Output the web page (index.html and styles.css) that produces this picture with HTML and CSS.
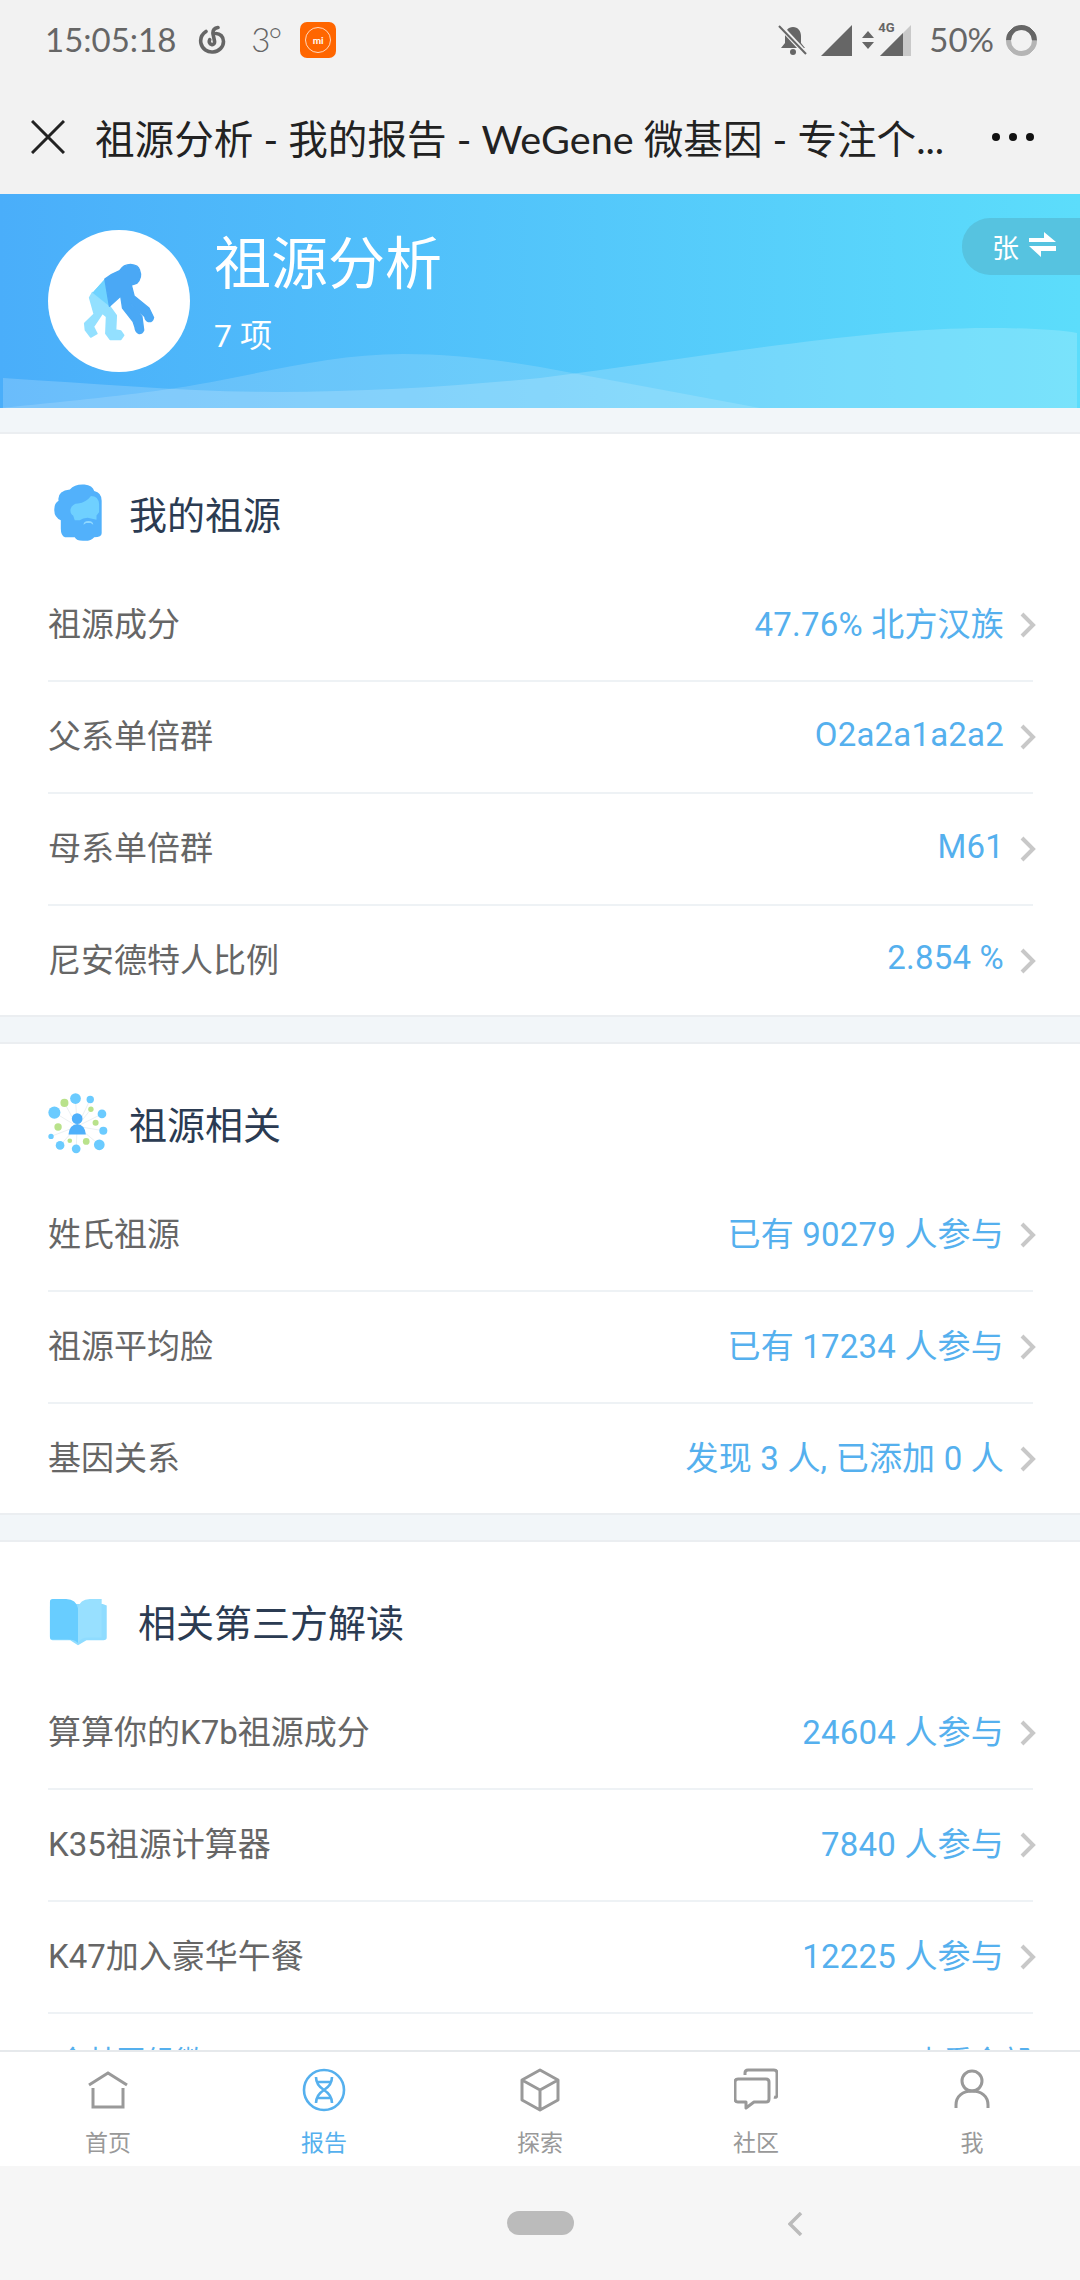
FILE: index.html
```html
<!DOCTYPE html>
<html>
<head>
    <meta charset="UTF-8">
    <meta name="viewport" content="width=device-width, initial-scale=1.0">
    <title>祖源分析 - 我的报告</title>
    <link rel="stylesheet" href="styles.css">
</head>
<body>
    <div class="status-bar">
        <div class="status-left">
            <span class="time">15:05:18</span>
            <svg class="ico-netease" viewBox="0 0 30 30"><path d="M20 2.500c-3 .5-5.500 2.500-5 6.500l1.500 7c.5 2.500-1 4-3 3.500-2-.4-2.800-2.800-1.800-4.800 M8 6.500C3.500 9.500 2 14 3 18.500c1.300 5.500 6.500 9 12 8.500 6-.5 10.500-5 10.500-10.500 0-5-3.500-8-7.500-8" fill="none" stroke="#666" stroke-width="3.600" stroke-linecap="round"/></svg>
            <span class="temp">3°</span>
            <span class="ico-mi"><span class="mi-ring"></span><span class="mi-text">mi</span></span>
        </div>
        <div class="status-right">
            <svg class="ico-bell" viewBox="0 0 32 32"><path d="M16 3c-5 0-8 4-8 9v7l-4 5h24l-4-5v-7c0-5-3-9-8-9z" fill="#666"/><circle cx="16" cy="28" r="3" fill="#666"/><path d="M3 2l26 28" stroke="#f2f2f2" stroke-width="5"/><path d="M2 2l27 28" stroke="#666" stroke-width="2"/></svg>
            <svg class="ico-signal" viewBox="0 0 31 31"><path d="M31 0v31H0z" fill="#666"/></svg>
            <svg class="ico-arrows" viewBox="0 0 12 18"><path d="M6 0l6 7H0zM6 18l-6-7h12z" fill="#666"/></svg>
            <span class="signal-4g">
                <span class="label-4g">4G</span>
                <svg class="ico-signal" viewBox="0 0 31 31"><path d="M31 0v31H0z" fill="#c9c9c9"/><path d="M23 8v23H0z" fill="#666"/></svg>
            </span>
            <span class="battery-text">50%</span>
            <span class="battery-ring"></span>
        </div>
    </div>

    <div class="nav-bar">
        <svg class="ico-close" viewBox="0 0 34 34"><path d="M1 1l32 32M33 1L1 33" stroke="#222" stroke-width="3"/></svg>
        <div class="nav-title">祖源分析 - 我的报告 - WeGene 微基因 - 专注个...</div>
        <div class="nav-dots"><i></i><i></i><i></i></div>
    </div>

    <div class="page">
        <div class="hero">
            <svg class="hero-waves" viewBox="0 0 1080 214" preserveAspectRatio="none">
                <path d="M0 214C60 208 120 202 162 196C250 184 320 160 403 160C450 160 500 166 540 173L760 214Z" fill="#fff" fill-opacity="0.15"/>
                <path d="M3 184C100 190 190 198 275 198C370 198 460 192 540 184C700 164 860 134 988 134C1030 134 1060 136 1077 139V214H3Z" fill="#fff" fill-opacity="0.18"/>
            </svg>
            <div class="hero-avatar">
                <svg viewBox="240 215 210 232" preserveAspectRatio="none" class="ico-monkey">
                    <path d="M270 305L305 265L318 345Z" fill="#6fd3ff"/>
                    <path d="M270 305L262 320L275 368L248 395L250 415L265 435L282 425L272 405L298 365L310 375L308 425L320 442L350 442L358 430L350 418L335 415L337 372L318 345Z" fill="#93e0ff" stroke="#93e0ff" stroke-width="5" stroke-linejoin="round"/>
                    <path d="M270 305L305 265L318 345Z" fill="#6fd3ff"/>
                    <path d="M305 265Q322 250 347 240Q358 222 378 222Q400 224 403 238Q412 262 395 278L380 283L388 315L430 350L443 378Q440 392 428 390Q420 388 418 375L377 338L410 375L415 415Q410 426 402 425Q392 422 390 405L385 390L355 350L350 315L318 345Z" fill="#4aa8f5" stroke="#4aa8f5" stroke-width="4" stroke-linejoin="round"/>
                </svg>
            </div>
            <div class="hero-text">
                <div class="hero-title">祖源分析</div>
                <div class="hero-count">7 项</div>
            </div>
            <div class="hero-switch">
                <span>张</span>
                <svg class="ico-swap" viewBox="0 0 27 25"><path d="M0 6h15V0l12 10H0zM27 14v5H12v6L0 14z" fill="#fff"/></svg>
            </div>
        </div>

        <div class="card">
            <div class="card-head">
                <svg class="ico-head" viewBox="95 65 160 185">
                    <path d="M150 85Q165 68 195 70Q220 72 225 90Q248 95 248 120L248 220Q248 232 225 232Q215 245 190 243Q170 243 165 232L135 232Q122 228 122 205L122 180Q100 170 102 145Q102 128 115 120Q110 90 150 85Z" fill="#52b1fb"/>
                    <path d="M152 145Q158 128 175 128Q200 125 215 105Q238 105 240 130L240 155L232 165L232 178L205 172Q190 172 180 180L165 180L160 165Q150 160 152 145Z" fill="#6fd0ff"/>
                    <path d="M192 194Q192 182 207 182Q222 182 222 194L214 188H200Z" fill="#8fd8ff"/>
                </svg>
                <span class="head-text">我的祖源</span>
            </div>
            <a class="row"><span class="row-label">祖源成分</span><span class="row-value">47.76% 北方汉族</span><svg class="chev" viewBox="0 0 16 26"><path d="M2 2l11 11L2 24"/></svg></a>
            <a class="row"><span class="row-label">父系单倍群</span><span class="row-value">O2a2a1a2a2</span><svg class="chev" viewBox="0 0 16 26"><path d="M2 2l11 11L2 24"/></svg></a>
            <a class="row"><span class="row-label">母系单倍群</span><span class="row-value">M61</span><svg class="chev" viewBox="0 0 16 26"><path d="M2 2l11 11L2 24"/></svg></a>
            <a class="row"><span class="row-label">尼安德特人比例</span><span class="row-value">2.854 %</span><svg class="chev" viewBox="0 0 16 26"><path d="M2 2l11 11L2 24"/></svg></a>
        </div>

        <div class="card">
            <div class="card-head">
                <svg class="ico-net" viewBox="80 90 185 190">
                    <path d="M173 195L168 112M173 195L212 115M173 195L105 154M173 195L247 158M173 195L251 208M173 195L95 225M173 195L122 252M173 195L170 262M173 195L239 250M173 195L135 125M173 195L214 144" stroke="#e3e8ec" stroke-width="2"/>
                    <g fill="#6bcbff">
                        <circle cx="168" cy="112" r="16"/><circle cx="212" cy="115" r="11"/><circle cx="105" cy="154" r="18"/>
                        <circle cx="247" cy="158" r="13"/><circle cx="251" cy="208" r="12"/><circle cx="95" cy="225" r="8"/>
                        <circle cx="122" cy="252" r="13"/><circle cx="170" cy="262" r="13"/><circle cx="239" cy="250" r="16"/>
                    </g>
                    <g fill="#b9e28b">
                        <circle cx="135" cy="125" r="12"/><circle cx="214" cy="144" r="8"/><circle cx="116" cy="197" r="11"/>
                        <circle cx="228" cy="184" r="9"/><circle cx="151" cy="238" r="7"/><circle cx="200" cy="240" r="10"/>
                    </g>
                    <circle cx="173" cy="172" r="16" fill="#4fb0fb"/>
                    <path d="M147 219Q150 190 173 188Q196 190 199 219Z" fill="#4fb0fb"/>
                </svg>
                <span class="head-text">祖源相关</span>
            </div>
            <a class="row"><span class="row-label">姓氏祖源</span><span class="row-value">已有 90279 人参与</span><svg class="chev" viewBox="0 0 16 26"><path d="M2 2l11 11L2 24"/></svg></a>
            <a class="row"><span class="row-label">祖源平均脸</span><span class="row-value">已有 17234 人参与</span><svg class="chev" viewBox="0 0 16 26"><path d="M2 2l11 11L2 24"/></svg></a>
            <a class="row"><span class="row-label">基因关系</span><span class="row-value">发现 3 人, 已添加 0 人</span><svg class="chev" viewBox="0 0 16 26"><path d="M2 2l11 11L2 24"/></svg></a>
        </div>

        <div class="card">
            <div class="card-head">
                <svg class="ico-book" viewBox="90 115 170 142">
                    <path d="M100 133H248L260 137V232Q260 240 250 240H200L175 255L152 240H100Q92 240 92 232V140Q92 133 100 133Z" fill="#8fdcff"/>
                    <path d="M100 118H140Q170 120 175 145V248Q165 238 145 238H100Q92 238 92 230V126Q92 118 100 118Z" fill="#68cdff"/>
                    <path d="M175 145Q180 120 210 118H245V232H205Q185 232 175 248Z" fill="#98e0ff"/>
                </svg>
                <span class="head-text">相关第三方解读</span>
            </div>
            <a class="row"><span class="row-label">算算你的K7b祖源成分</span><span class="row-value">24604 人参与</span><svg class="chev" viewBox="0 0 16 26"><path d="M2 2l11 11L2 24"/></svg></a>
            <a class="row"><span class="row-label">K35祖源计算器</span><span class="row-value">7840 人参与</span><svg class="chev" viewBox="0 0 16 26"><path d="M2 2l11 11L2 24"/></svg></a>
            <a class="row"><span class="row-label">K47加入豪华午餐</span><span class="row-value">12225 人参与</span><svg class="chev" viewBox="0 0 16 26"><path d="M2 2l11 11L2 24"/></svg></a>
            <a class="row row-peek"><span class="row-value row-more">全基因组微</span><span class="row-value">查看全部</span></a>
        </div>
    </div>

    <div class="tab-bar">
        <div class="tab">
            <svg class="tab-ico" viewBox="0 0 44 44"><path d="M3 17L22 5l19 12M7 20v19h30V20" fill="none" stroke="#999" stroke-width="3"/></svg>
            <span>首页</span>
        </div>
        <div class="tab tab-active">
            <svg class="tab-ico" viewBox="0 0 44 44"><circle cx="22" cy="22" r="20" fill="none" stroke="#55b0ee" stroke-width="2.600"/><path d="M14 9Q14 17 22 22T30 35M30 9Q30 17 22 22T14 35M15 14H29M15 30H29" fill="none" stroke="#55b0ee" stroke-width="2.600"/></svg>
            <span>报告</span>
        </div>
        <div class="tab">
            <svg class="tab-ico" viewBox="0 0 44 44"><path d="M22 2l18 10v20L22 42 4 32V12zM4 12l18 10 18-10M22 22v20" fill="none" stroke="#999" stroke-width="3" stroke-linejoin="round"/></svg>
            <span>探索</span>
        </div>
        <div class="tab">
            <svg class="tab-ico" viewBox="0 0 44 44"><path d="M4 11h28q3 0 3 3v17q0 3-3 3H20l-8 6v-6H4q-3 0-3-3V14q0-3 3-3zM11 7V5q0-3 3-3h26q3 0 3 3v22q0 3-3 2" fill="none" stroke="#999" stroke-width="3" stroke-linejoin="round"/></svg>
            <span>社区</span>
        </div>
        <div class="tab">
            <svg class="tab-ico" viewBox="0 0 44 44"><circle cx="22" cy="13" r="10" fill="none" stroke="#999" stroke-width="3"/><path d="M6 40v-3c0-9 7-14 16-14s16 5 16 14v3" fill="none" stroke="#999" stroke-width="3"/></svg>
            <span>我</span>
        </div>
    </div>

    <div class="system-bar">
        <span class="home-pill"></span>
        <svg class="ico-back" viewBox="0 0 15 24"><path d="M13 1L2 12l11 11" fill="none" stroke="#bbb" stroke-width="3.500"/></svg>
    </div>
</body>
</html>
```

FILE: styles.css
```css
* {
    box-sizing: border-box;
}
html, body {
    margin: 0;
    padding: 0;
}
body {
    width: 1080px;
    height: 2280px;
    overflow: hidden;
    display: flex;
    flex-direction: column;
    background-color: #F2F6F9;
    font-family: 'Roboto', 'Noto Sans CJK SC', sans-serif;
}

/* phone status bar */
.status-bar {
    height: 80px;
    background-color: #F2F2F2;
    display: flex;
    justify-content: space-between;
    align-items: center;
    padding: 0 43px 0 45px;
    color: #666;
    font-family: 'Lato', 'Noto Sans CJK SC', sans-serif;
    font-size: 33px;
}
.status-left, .status-right {
    display: flex;
    align-items: center;
}
.time, .temp, .battery-text {
    margin-top: -2px;
}
.ico-netease {
    width: 30px;
    height: 30px;
    margin-left: 22px;
}
.temp {
    margin-left: 23px;
    letter-spacing: -2px;
    font-weight: 300;
}
.ico-mi {
    position: relative;
    width: 36px;
    height: 36px;
    margin-left: 20px;
    border-radius: 7px;
    background-color: #FF6600;
    display: flex;
    align-items: center;
    justify-content: center;
}
.mi-ring {
    position: absolute;
    left: 5px;
    top: 5px;
    width: 26px;
    height: 26px;
    border-radius: 50%;
    border: 1px solid #ffd9bf;
}
.mi-text {
    color: #fff;
    font-size: 10px;
    font-weight: bold;
    line-height: 1;
}
.ico-bell {
    width: 32px;
    height: 32px;
    margin-right: 12px;
}
.ico-signal {
    width: 31px;
    height: 31px;
    display: block;
}
.ico-arrows {
    width: 12px;
    height: 18px;
    margin: 0 6px 0 10px;
}
.signal-4g {
    position: relative;
    display: block;
}
.label-4g {
    position: absolute;
    left: -2px;
    top: -4px;
    font-family: 'Roboto', sans-serif;
    font-size: 13px;
    font-weight: bold;
    line-height: 1;
}
.battery-text {
    margin-left: 18px;
}
.battery-ring {
    width: 31px;
    height: 31px;
    margin-left: 12px;
    border-radius: 50%;
    border: 5px solid #666;
    border-left-color: #b5b5b5;
    border-bottom-color: #b5b5b5;
    transform: rotate(-45deg);
}

/* webview title bar */
.nav-bar {
    height: 114px;
    background-color: #F2F2F2;
    display: flex;
    align-items: center;
    padding: 0 46px 0 31px;
}
.ico-close {
    width: 34px;
    height: 34px;
    flex: none;
}
.nav-title {
    margin: -2px 0 0 30px;
    flex: 1;
    font-family: 'Lato', 'Noto Sans CJK SC', sans-serif;
    font-size: 39.6px;
    color: #222;
    white-space: nowrap;
    overflow: hidden;
}
.nav-dots {
    display: flex;
    gap: 9px;
}
.nav-dots i {
    display: block;
    width: 8px;
    height: 8px;
    border-radius: 50%;
    background-color: #111;
}

/* scrolling content */
.page {
    height: 1856px;
    overflow: hidden;
}
.hero {
    position: relative;
    height: 214px;
    display: flex;
    align-items: center;
    padding-left: 48px;
    background: linear-gradient(90deg, #4AAEFA, #5CDDFB);
    overflow: hidden;
}
.hero-waves {
    position: absolute;
    left: 0;
    top: 0;
    width: 1080px;
    height: 214px;
}
.hero-avatar {
    position: relative;
    width: 142px;
    height: 142px;
    border-radius: 50%;
    background-color: #fff;
    display: flex;
    align-items: center;
    justify-content: center;
}
.ico-monkey {
    width: 74px;
    height: 79px;
}
.hero-text {
    position: relative;
    margin: 0 0 16px 24px;
    color: #fff;
}
.hero-title {
    font-size: 57px;
    line-height: 66px;
    margin-bottom: 20px;
}
.hero-count {
    font-size: 32px;
    line-height: 36px;
}
.hero-switch {
    position: absolute;
    right: 0;
    top: 24px;
    width: 118px;
    height: 57px;
    padding-left: 30px;
    border-radius: 28px 0 0 28px;
    background-color: #56C3E0;
    display: flex;
    align-items: center;
    color: #fff;
    font-size: 27px;
}
.ico-swap {
    width: 27px;
    height: 25px;
    margin-left: 10px;
    margin-top: -4px;
}

.card {
    margin-top: 25px;
    background-color: #fff;
    border-top: 2px solid #EBEEF1;
    border-bottom: 2px solid #EBEEF1;
}
.hero + .card {
    margin-top: 24px;
}
.card-head {
    height: 136px;
    padding: 24px 0 0 48px;
    display: flex;
    align-items: center;
    font-size: 38px;
    color: #2B3B52;
}
.card-head svg {
    flex: none;
}
.head-text {
    margin-bottom: 4px;
}
.ico-head {
    width: 52px;
    height: 60px;
    margin: -3px 25px 0 4px;
}
.ico-net {
    width: 62px;
    height: 64px;
    margin: -2px 21px 0 -2px;
}
.ico-book {
    width: 58px;
    height: 48px;
    margin: 0 31px 0 1px;
}

.row {
    height: 112px;
    margin: 0 47px 0 48px;
    display: flex;
    align-items: center;
    border-bottom: 2px solid #EEF2F5;
    font-size: 33px;
}
.row:last-child {
    height: 109px;
    border-bottom: none;
}
.row-label {
    flex: 1;
    margin-bottom: 6px;
    color: #666;
    white-space: nowrap;
}
.row-value {
    margin-bottom: 6px;
    color: #55B0EE;
    white-space: nowrap;
    letter-spacing: 0.2px;
}
.chev {
    width: 16px;
    height: 26px;
    margin-left: 16px;
    margin-right: -3px;
    fill: none;
    stroke: #C8C8C8;
    stroke-width: 4;
}
/* row cut off by the tab bar, only the top of its text shows */
.row-peek {
    align-items: flex-start;
    padding: 24px 0 0 10px;
    margin-right: 49px;
    font-size: 29px;
}
.row-more {
    flex: 1;
}

/* bottom tabs */
.tab-bar {
    height: 116px;
    background-color: #fff;
    border-top: 2px solid #E6E9EC;
    display: flex;
}
.tab {
    flex: 1;
    display: flex;
    flex-direction: column;
    align-items: center;
    padding-top: 16px;
    font-size: 23px;
    line-height: 30px;
    color: #999;
}
.tab-ico {
    width: 44px;
    height: 44px;
    margin-bottom: 17px;
}
.tab-active {
    color: #55B0EE;
}

.system-bar {
    flex: 1;
    background-color: #F6F6F6;
    display: flex;
    align-items: center;
    justify-content: center;
    position: relative;
}
.home-pill {
    width: 67px;
    height: 24px;
    border-radius: 12px;
    background-color: #BBB;
}
.ico-back {
    position: absolute;
    left: 788px;
    top: 46px;
    width: 15px;
    height: 24px;
}
```
